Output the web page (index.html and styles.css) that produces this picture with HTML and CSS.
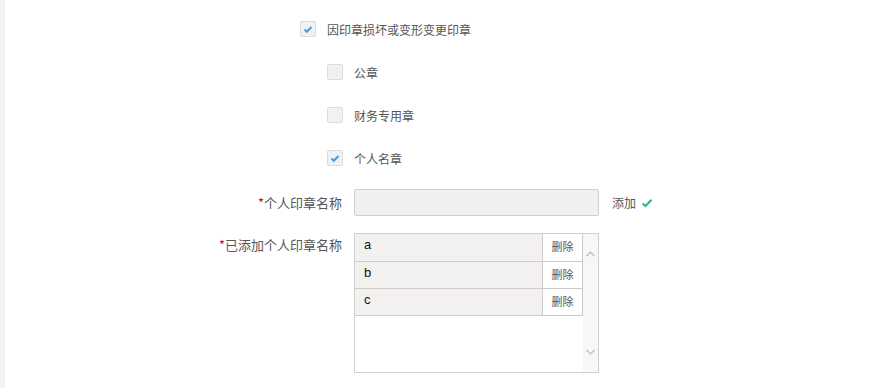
FILE: index.html
```html
<!DOCTYPE html>
<html lang="zh-CN">
<head>
  <meta charset="UTF-8" />
  <title>印章变更</title>
  <link rel="stylesheet" href="styles.css">
</head>
<body>
  <div class="side"></div>
  <main class="page">
    <div class="checks">
      <label class="check-row">
        <span class="box checked"><svg viewBox="0 0 16 16"><path d="M4 8.5l2.6 2.6L12 5.6"/></svg></span>
        <span>因印章损坏或变形变更印章</span>
      </label>
      <div class="sub-checks">
        <label class="check-row">
          <span class="box"></span>
          <span>公章</span>
        </label>
        <label class="check-row">
          <span class="box"></span>
          <span>财务专用章</span>
        </label>
        <label class="check-row">
          <span class="box checked"><svg viewBox="0 0 16 16"><path d="M4 8.5l2.6 2.6L12 5.6"/></svg></span>
          <span>个人名章</span>
        </label>
      </div>
    </div>

    <div class="form-row center">
      <div class="form-label"><em>*</em>个人印章名称</div>
      <div class="form-field">
        <input class="text-input" type="text">
        <span class="add-btn">添加 <svg viewBox="0 0 12 12"><path d="M1.5 6.5l3 2.6L10.5 2.8"/></svg></span>
      </div>
    </div>

    <div class="form-row">
      <div class="form-label"><em>*</em>已添加个人印章名称</div>
      <div class="form-field">
        <div class="list-box">
          <table class="seal-table">
            <tr><td class="name">a</td><td class="op">删除</td></tr>
            <tr><td class="name">b</td><td class="op">删除</td></tr>
            <tr><td class="name">c</td><td class="op">删除</td></tr>
          </table>
          <div class="scroll">
            <svg viewBox="0 0 12 8"><path d="M1.5 6.5L6 2l4.5 4.5"/></svg>
            <svg viewBox="0 0 12 8"><path d="M1.5 1.5L6 6l4.5-4.5"/></svg>
          </div>
        </div>
      </div>
    </div>
  </main>
</body>
</html>
```

FILE: styles.css
```css
* { box-sizing: border-box; margin: 0; padding: 0; }
body {
  font-family: "Noto Sans CJK SC", "Liberation Sans", sans-serif;
  background: #fff;
  color: #555;
  height: 388px;
  display: flex;
  overflow: hidden;
}
.side { width: 5px; background: #f4f3f1; flex: none; }
.page { flex: 1; padding-top: 21px; }

.checks { margin-left: 295px; display: flex; flex-direction: column; gap: 27px; }
.sub-checks { padding-left: 27px; display: flex; flex-direction: column; gap: 27px; }
.check-row {
  display: flex;
  align-items: center;
  gap: 11px;
  height: 16px;
  font-size: 12px;
  color: #555;
}
.box {
  width: 16px;
  height: 16px;
  border: 1px solid #dcdcdc;
  border-radius: 2px;
  background: #f1f1f1;
  display: flex;
  align-items: center;
  justify-content: center;
}
.box svg { width: 14px; height: 14px; fill: none; stroke: #4a9ddb; stroke-width: 2.4; }

.form-row { display: flex; gap: 12px; margin-top: 17px; }
.form-row.center { margin-top: 23px; align-items: center; }
.form-label {
  width: 337px;
  text-align: right;
  font-size: 13px;
  color: #555;
  line-height: 24px;
}
.form-label em { font-style: normal; color: #e60012; }
.form-field { display: flex; align-items: center; gap: 13px; }

.text-input {
  width: 245px;
  height: 27px;
  border: 1px solid #d0d0d0;
  border-radius: 2px;
  background: #f0f0f0;
  outline: none;
}
.add-btn { font-size: 12px; color: #555; display: flex; align-items: center; gap: 5px; }
.add-btn svg { width: 12px; height: 12px; fill: none; stroke: #2fb69a; stroke-width: 2.2; }

.list-box {
  width: 245px;
  height: 140px;
  border: 1px solid #d0d0d0;
  display: flex;
}
.seal-table {
  width: 228px;
  border-collapse: collapse;
  align-self: flex-start;
  font-family: "Liberation Sans", sans-serif;
}
.seal-table td {
  height: 27px;
  border: 1px solid #cfc9c9;
  border-top: none;
  border-left: none;
  vertical-align: top;
  padding-top: 3px;
}
.seal-table td.name { background: #f2f1f0; padding-left: 9px; font-size: 13px; color: #111; }
.seal-table td.op {
  width: 40px;
  text-align: center;
  font-size: 11px;
  color: #555;
  font-family: "Noto Sans CJK SC", sans-serif;
  padding-top: 4px;
}
.scroll {
  flex: 1;
  background: #f7f7f7;
  display: flex;
  flex-direction: column;
  justify-content: space-between;
  align-items: center;
  padding: 16px 0 16px;
}
.scroll svg { width: 11px; height: 8px; fill: none; stroke: #bdbdbd; stroke-width: 1.4; }
```
